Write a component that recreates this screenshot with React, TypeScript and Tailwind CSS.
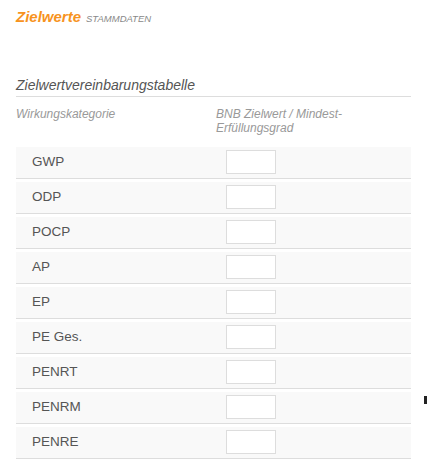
const rows = ['GWP', 'ODP', 'POCP', 'AP', 'EP', 'PE Ges.', 'PENRT', 'PENRM', 'PENRE'];

export default function App() {
  return (
    <div className="relative min-h-[462px] w-[427px] bg-white font-[Arial,'Liberation_Sans',sans-serif]">
      <div className="px-4 pt-[6px]">
        {/* Page title */}
        <div className="flex h-[22px] items-baseline gap-[5px]">
          <h1 className="text-[15px] font-bold italic leading-[22px] text-[#f7931e]">Zielwerte</h1>
          <span className="text-[9.5px] italic uppercase text-[#888]">Stammdaten</span>
        </div>

        {/* Table */}
        <div className="mt-[49px]">
          <h2 className="border-b border-[#ddd] pb-[2px] text-[14px] italic leading-[17px] text-[#555]">
            Zielwertvereinbarungstabelle
          </h2>
          <div className="mt-[10px] flex text-[12px] italic leading-[14px] text-[#999]">
            <div className="w-[200px]">Wirkungskategorie</div>
            <div className="w-[150px]">BNB Zielwert / Mindest-Erfüllungsgrad</div>
          </div>
          <div className="mt-[12px] flex flex-col gap-[3px]">
            {rows.map((name) => (
              <div
                key={name}
                className="flex h-[32px] items-center border-b border-[#ddd] bg-[#f9f9f9] pb-[1px]"
              >
                <div className="w-[210px] pl-4 text-[13.5px] text-[#555]">{name}</div>
                <input
                  type="text"
                  className="h-[24px] w-[50px] border border-[#ddd] bg-white"
                  aria-label={name}
                />
              </div>
            ))}
          </div>
        </div>
      </div>
      <div className="absolute left-[424px] top-[396px] h-[8px] w-[3px] bg-[#222]" />
    </div>
  );
}
